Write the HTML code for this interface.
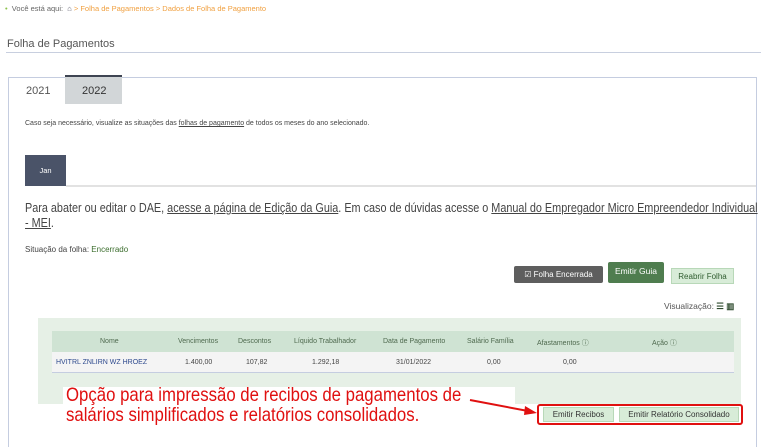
<!DOCTYPE html>
<html><head><meta charset="utf-8"><style>
*{margin:0;padding:0;box-sizing:border-box}
body{width:768px;height:438px;overflow:hidden;background:#fff;font-family:"Liberation Sans",sans-serif;position:relative;color:#333}
.a{position:absolute;white-space:nowrap}
u{text-decoration:underline}
</style></head><body>
<div class="a" style="left:5px;top:4px;font-size:7.5px;color:#666"><span style="color:#8bc34a">•</span>&nbsp; Você está aqui: &nbsp;<span style="color:#556">⌂</span> <span style="color:#f0a040">&gt; Folha de Pagamentos &gt; Dados de Folha de Pagamento</span></div>
<div class="a" style="left:7px;top:38px;font-size:11px;color:#555">Folha de Pagamentos</div>
<div class="a" style="left:6px;top:52px;width:755px;height:1px;background:#c8cfdf"></div>
<div class="a" style="left:8px;top:77px;width:749px;height:370px;border:1px solid #c5cde0;border-bottom:none"></div>
<div class="a" style="left:26px;top:85px;font-size:11px;color:#555">2021</div>
<div class="a" style="left:65px;top:75px;width:57px;height:29px;background:#d2d6d8;border-top:2px solid #3e4452"></div>
<div class="a" style="left:82px;top:85px;font-size:11px;color:#333">2022</div>
<div class="a" style="left:25px;top:120px;font-size:7px;color:#444">Caso seja necessário, visualize as situações das <u>folhas de pagamento</u> de todos os meses do ano selecionado.</div>
<div class="a" style="left:25px;top:155px;width:41px;height:31px;background:#4a5368;color:#fff;font-size:7.5px;text-align:center;line-height:31px">Jan</div>
<div class="a" style="left:66px;top:185px;width:690px;height:2px;background:#e2e2e2"></div>
<div class="a" style="left:25px;top:201px;font-size:12.5px;color:#444;line-height:15px;transform:scaleX(0.867);transform-origin:left">Para abater ou editar o DAE, <u>acesse a página de Edição da Guia</u>. Em caso de dúvidas acesse o <u>Manual do Empregador Micro Empreendedor Individual</u><br><u>- MEI</u>.</div>
<div class="a" style="left:25px;top:245px;font-size:8px;color:#444">Situação da folha: <span style="color:#3c6e2e">Encerrado</span></div>
<div class="a" style="left:514px;top:266px;width:89px;height:17px;background:#5e5e5e;border-radius:2px;color:#fff;font-size:8px;text-align:center;line-height:17px">☑ Folha Encerrada</div>
<div class="a" style="left:608px;top:262px;width:56px;height:21px;background:#4f7d4f;border-radius:2px;color:#fff;font-size:8.5px;text-align:center;line-height:19px">Emitir Guia</div>
<div class="a" style="left:671px;top:268px;width:63px;height:16px;background:#d8ecd8;border:1px solid #b8d8b8;color:#2f5c2f;font-size:8px;text-align:center;line-height:15px">Reabrir Folha</div>
<div class="a" style="left:664px;top:301px;font-size:8.5px;color:#555">Visualização: <span style="color:#2d4a2d;font-weight:bold">☰ ▥</span></div>
<div class="a" style="left:38px;top:318px;width:703px;height:86px;background:#e6f0e6"></div>
<div class="a" style="left:52px;top:331px;width:682px;height:21px;background:#cfe3d3"></div>
<div class="a" style="left:52px;top:352px;width:682px;height:21px;background:#f4f4f4;border-bottom:1px solid #c5cde0"></div>
<div style="font-size:7px;color:#4f6a4f">
<div class="a" style="left:100px;top:338px">Nome</div>
<div class="a" style="left:178px;top:338px">Vencimentos</div>
<div class="a" style="left:238px;top:338px">Descontos</div>
<div class="a" style="left:294px;top:338px">Líquido Trabalhador</div>
<div class="a" style="left:383px;top:338px">Data de Pagamento</div>
<div class="a" style="left:467px;top:338px">Salário Família</div>
<div class="a" style="left:537px;top:338px">Afastamentos ⓘ</div>
<div class="a" style="left:652px;top:338px">Ação ⓘ</div>
</div>
<div style="font-size:7px;color:#444">
<div class="a" style="left:56px;top:359px;color:#2e4a8e">HVITRL ZNLIRN WZ HROEZ</div>
<div class="a" style="left:185px;top:359px">1.400,00</div>
<div class="a" style="left:246px;top:359px">107,82</div>
<div class="a" style="left:312px;top:359px">1.292,18</div>
<div class="a" style="left:396px;top:359px">31/01/2022</div>
<div class="a" style="left:487px;top:359px">0,00</div>
<div class="a" style="left:563px;top:359px">0,00</div>
</div>
<div class="a" style="left:63px;top:387px;width:452px;height:40px;background:#fff"></div>
<div class="a" style="left:66px;top:385px;font-size:19.5px;color:#e01010;line-height:20px;transform:scaleX(0.86);transform-origin:left">Opção para impressão de recibos de pagamentos de<br>salários simplificados e relatórios consolidados.</div>
<svg class="a" style="left:0;top:0" width="768" height="438"><line x1="470" y1="400" x2="528" y2="411" stroke="#e01010" stroke-width="2"/><polygon points="537,413 525,406 524,415" fill="#e01010"/></svg>
<div class="a" style="left:537px;top:404px;width:206px;height:21px;border:2px solid #e01010;border-radius:3px;background:#fff"></div>
<div class="a" style="left:543px;top:407px;width:71px;height:15px;background:#d8ecd8;border:1px solid #b8d8b8;font-size:8px;color:#333;text-align:center;line-height:13px">Emitir Recibos</div>
<div class="a" style="left:619px;top:407px;width:120px;height:15px;background:#d8ecd8;border:1px solid #b8d8b8;font-size:8px;color:#333;text-align:center;line-height:13px">Emitir Relatório Consolidado</div>
</body></html>
